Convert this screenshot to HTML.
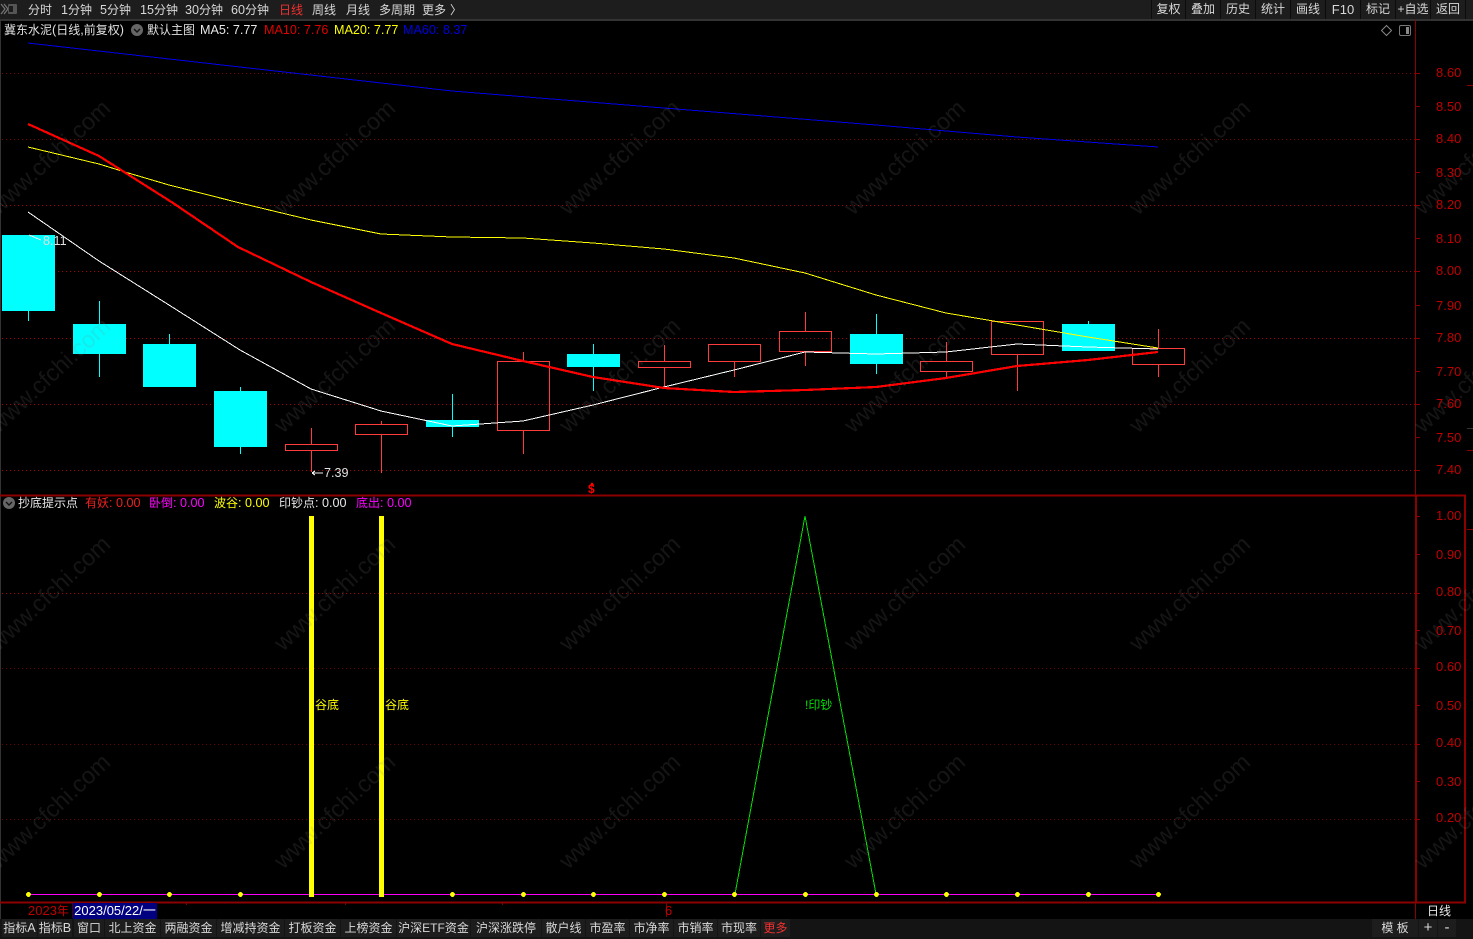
<!DOCTYPE html>
<html lang="zh"><head><meta charset="utf-8"><title>冀东水泥</title>
<style>
html,body{margin:0;padding:0;background:#000;width:1473px;height:939px;overflow:hidden}
body{position:relative;font-family:"Liberation Sans","Noto Sans CJK SC",sans-serif;font-size:12px;color:#d8d8d8}
svg{position:absolute;left:0;top:0}
.t{position:absolute;white-space:nowrap;line-height:16px;height:16px}
.n{font-size:12.6px}
.b{position:absolute;background:#1d1d1d;text-align:center;white-space:nowrap;line-height:18px;height:18px;top:919px;color:#d8d8d8}
.u{position:absolute;background:#1d1d1d;text-align:center;white-space:nowrap;line-height:19px;height:19px;top:0;color:#d8d8d8}
.a{position:absolute;left:1436px;color:#c00000;font-size:13px;line-height:16px;height:16px}
.r{color:#e00000}.m{color:#f0f}.y{color:#ff0}.bl{color:#0000e0}.w{color:#e8e8e8}
</style></head><body>
<div style="position:absolute;left:0;top:0;width:1473px;height:19px;background:#1d1d1d"></div>
<div style="position:absolute;left:0;top:19px;width:1473px;height:2px;background:#333"></div>
<div style="position:absolute;left:0;top:919px;width:1473px;height:20px;background:#141414"></div>

<svg width="1473" height="939" viewBox="0 0 1473 939" shape-rendering="crispEdges" fill="none">
<line x1="0.5" y1="20" x2="0.5" y2="919" stroke="#333"/>
<!-- grid -->
<g stroke="#800000" stroke-dasharray="1 3">
<path d="M2 73.5H1415M2 139.5H1415"/>
</g>
<g stroke="#6a0000" stroke-dasharray="1 3">
<path d="M2 668.5H1415M2 744.5H1415M2 819.5H1415"/>
</g>
<g stroke="#a80000" stroke-dasharray="1 3">
<path d="M2 205.5H1415M2 271.5H1415M2 338.5H1415M2 404.5H1415M2 470.5H1415M2 593.5H1415"/>
</g>
<!-- axes -->
<g stroke="#8c0000">
<path d="M1415.5 20V496M1415.5 902V919"/>
<path d="M0 495.5H1466M0 902.5H1466" stroke-width="2"/>
<path d="M1416 495V903M1465 495V903" stroke-width="2"/>
<path d="M1415 73.5h5M1415 106.5h5M1415 139.5h5M1415 172.5h5M1415 205.5h5M1415 238.5h5M1415 271.5h5M1415 305.5h5M1415 338.5h5M1415 371.5h5M1415 404.5h5M1415 437.5h5M1415 470.5h5M1415 516.5h5M1415 554.5h5M1415 593.5h5M1415 630.5h5M1415 668.5h5M1415 705.5h5M1415 744.5h5M1415 781.5h5M1415 819.5h5"/>
<path d="M1467 85.5h6M1467 450.5h6M1467 529.5h6M186.5 903v2M345.5 903v2M502.5 903v2M666.5 903v14M73 903v15"/>
</g>
<path d="M1467 428.5h6" stroke="#333"/>
<!-- cyan candles -->
<g fill="#0ff" stroke="none">
<rect x="2" y="235" width="53" height="76"/><rect x="28" y="311" width="1" height="10"/>
<rect x="73" y="324" width="53" height="30"/><rect x="99" y="301" width="1" height="76"/>
<rect x="143" y="344" width="53" height="43"/><rect x="169" y="334" width="1" height="10"/>
<rect x="214" y="391" width="53" height="56"/><rect x="240" y="387" width="1" height="67"/>
<rect x="426" y="420" width="53" height="7"/><rect x="452" y="394" width="1" height="43"/>
<rect x="567" y="354" width="53" height="13"/><rect x="593" y="344" width="1" height="47"/>
<rect x="850" y="334" width="53" height="30"/><rect x="876" y="314" width="1" height="60"/>
<rect x="1062" y="324" width="53" height="27"/><rect x="1088" y="321" width="1" height="3"/>
</g>
<!-- red candles -->
<g stroke="#ff3c3c">
<rect x="285.5" y="444.5" width="52" height="6"/><path d="M311.5 428V444M311.5 451V472"/>
<rect x="355.5" y="424.5" width="52" height="10"/><path d="M381.5 421V424M381.5 435V473"/>
<rect x="497.5" y="361.5" width="52" height="69"/><path d="M523.5 352V361M523.5 431V454"/>
<rect x="638.5" y="361.5" width="52" height="6"/><path d="M664.5 345V361M664.5 368V388"/>
<rect x="708.5" y="344.5" width="52" height="17"/><path d="M734.5 362V377"/>
<rect x="779.5" y="331.5" width="52" height="20"/><path d="M805.5 312V331M805.5 352V366"/>
<rect x="920.5" y="361.5" width="52" height="10"/><path d="M946.5 342V361M946.5 372V378"/>
<rect x="991.5" y="321.5" width="52" height="33"/><path d="M1017.5 355V391"/>
<rect x="1132.5" y="348.5" width="52" height="16"/><path d="M1158.5 329V348M1158.5 365V377"/>
</g>
<!-- MA lines -->
<polyline stroke="#0000e6" points="28,43 240,67 452,91 664,108 876,125 1017,137 1158,147"/>
<polyline stroke="#ffff00" stroke-width="1" points="28,147 99,164 125,172 169,185 240,203 311,220 381,234 452,237 523,238 593,243 664,249 734,258 805,273 876,295 946,313 1017,325 1088,337 1158,348"/>
<polyline stroke="#ffffff" stroke-width="1" points="28,212 99,261 169,305 240,350 311,389 381,411 452,426 523,421 593,405 664,387 734,370 805,352 876,354 946,352 1017,344 1088,347 1158,349"/>
<polyline stroke="#ff0000" stroke-width="2.2" points="28,124 99,156 173,203 238,247 311,282 381,313 452,344 523,361 593,377 664,388 734,392 805,390 876,387 946,378 1017,366 1088,360 1158,352"/>
<!-- arrows -->
<path d="M29 235 L41 240" stroke="#eee"/>
<path d="M312 473H323M312 473l3-2M312 473l3 2" stroke="#eee"/>
<!-- lower panel -->
<rect x="309" y="516" width="5" height="378" fill="#ff0" stroke="none"/>
<rect x="379" y="516" width="5" height="378" fill="#ff0" stroke="none"/>
<polyline stroke="#00e000" points="735,894 805,516 876,894"/>
<path d="M28 894.5H1158" stroke="#f0f"/>
<g fill="#ff0" stroke="none">
<circle cx="28.5" cy="894.5" r="2.4"/><circle cx="99.5" cy="894.5" r="2.4"/><circle cx="169.5" cy="894.5" r="2.4"/><circle cx="240.5" cy="894.5" r="2.4"/>
<rect x="309" y="890" width="5" height="7"/><rect x="379" y="890" width="5" height="7"/>
<circle cx="452.5" cy="894.5" r="2.4"/><circle cx="523.5" cy="894.5" r="2.4"/><circle cx="593.5" cy="894.5" r="2.4"/><circle cx="664.5" cy="894.5" r="2.4"/><circle cx="734.5" cy="894.5" r="2.4"/><circle cx="805.5" cy="894.5" r="2.4"/><circle cx="876.5" cy="894.5" r="2.4"/><circle cx="946.5" cy="894.5" r="2.4"/><circle cx="1017.5" cy="894.5" r="2.4"/><circle cx="1088.5" cy="894.5" r="2.4"/><circle cx="1158.5" cy="894.5" r="2.4"/>
</g>
<!-- $ mark -->
<path d="M592 482l-2 3h4z" fill="#f00" stroke="none"/>
</svg>

<!-- watermark -->
<svg width="1473" height="939" viewBox="0 0 1473 939" style="z-index:3" shape-rendering="geometricPrecision">
<g fill="rgba(130,130,130,.16)" font-family="Liberation Sans,sans-serif" font-size="23.5" text-anchor="middle">
<text transform="translate(55,163) rotate(-43)">www.cfchi.com</text>
<text transform="translate(340,163) rotate(-43)">www.cfchi.com</text>
<text transform="translate(625,163) rotate(-43)">www.cfchi.com</text>
<text transform="translate(910,163) rotate(-43)">www.cfchi.com</text>
<text transform="translate(1195,163) rotate(-43)">www.cfchi.com</text>
<text transform="translate(1480,163) rotate(-43)">www.cfchi.com</text>
<text transform="translate(55,381) rotate(-43)">www.cfchi.com</text>
<text transform="translate(340,381) rotate(-43)">www.cfchi.com</text>
<text transform="translate(625,381) rotate(-43)">www.cfchi.com</text>
<text transform="translate(910,381) rotate(-43)">www.cfchi.com</text>
<text transform="translate(1195,381) rotate(-43)">www.cfchi.com</text>
<text transform="translate(1480,381) rotate(-43)">www.cfchi.com</text>
<text transform="translate(55,599) rotate(-43)">www.cfchi.com</text>
<text transform="translate(340,599) rotate(-43)">www.cfchi.com</text>
<text transform="translate(625,599) rotate(-43)">www.cfchi.com</text>
<text transform="translate(910,599) rotate(-43)">www.cfchi.com</text>
<text transform="translate(1195,599) rotate(-43)">www.cfchi.com</text>
<text transform="translate(1480,599) rotate(-43)">www.cfchi.com</text>
<text transform="translate(55,817) rotate(-43)">www.cfchi.com</text>
<text transform="translate(340,817) rotate(-43)">www.cfchi.com</text>
<text transform="translate(625,817) rotate(-43)">www.cfchi.com</text>
<text transform="translate(910,817) rotate(-43)">www.cfchi.com</text>
<text transform="translate(1195,817) rotate(-43)">www.cfchi.com</text>
<text transform="translate(1480,817) rotate(-43)">www.cfchi.com</text>
</g>
</svg>

<!-- top bar -->
<svg width="20" height="19" style="z-index:4" viewBox="0 0 20 19" fill="none">
<path d="M1 4l4 5-4 5" stroke="#777" stroke-width="1.2"/><path d="M4 4l4 5-4 5" stroke="#777" stroke-width="1.2"/>
<rect x="8" y="4" width="9" height="10" rx="1" fill="#555"/><rect x="9" y="6" width="4" height="6" fill="#1d1d1d"/>
</svg>
<div style="z-index:4;position:absolute;left:0;top:0">
<span class="t" style="left:28px;top:2px">分时</span>
<span class="t" style="left:61px;top:2px"><span class="n">1</span>分钟</span>
<span class="t" style="left:100px;top:2px"><span class="n">5</span>分钟</span>
<span class="t" style="left:140px;top:2px"><span class="n">15</span>分钟</span>
<span class="t" style="left:185px;top:2px"><span class="n">30</span>分钟</span>
<span class="t" style="left:231px;top:2px"><span class="n">60</span>分钟</span>
<span class="t" style="left:279px;top:2px;color:#f03030">日线</span>
<span class="t" style="left:312px;top:2px">周线</span>
<span class="t" style="left:346px;top:2px">月线</span>
<span class="t" style="left:379px;top:2px">多周期</span>
<span class="t" style="left:422px;top:2px">更多</span>
<span class="t" style="left:450px;top:2px">〉</span>
</div>
<div class="u" style="left:1152px;width:33px">复权</div>
<div class="u" style="left:1186px;width:34px">叠加</div>
<div class="u" style="left:1221px;width:34px">历史</div>
<div class="u" style="left:1256px;width:34px">统计</div>
<div class="u" style="left:1291px;width:34px">画线</div>
<div class="u" style="left:1326px;width:34px;font-size:13px">F10</div>
<div class="u" style="left:1361px;width:34px">标记</div>
<div class="u" style="left:1396px;width:34px">+自选</div>
<div class="u" style="left:1431px;width:34px">返回</div>
<svg width="1473" height="40" style="z-index:4" viewBox="0 0 1473 40" fill="none">
<path d="M1151.5 0V19M1185.5 0V19M1220.5 0V19M1255.5 0V19M1290.5 0V19M1325.5 0V19M1360.5 0V19M1395.5 0V19M1430.5 0V19M1465.5 0V19" stroke="#0c0c0c"/>
<path d="M1386.5 25.5l5 5-5 5-5-5z" stroke="#888"/>
<rect x="1399.5" y="25.5" width="11" height="10" rx="1.5" stroke="#777"/><rect x="1406" y="27" width="3" height="7" fill="#888"/>
<circle cx="137" cy="30" r="6" fill="#666"/><path d="M134 29l3 3 3-3" stroke="#111" stroke-width="1.4"/>
</svg>

<!-- header row -->
<div style="z-index:4;position:absolute;left:0;top:0">
<span class="t" style="left:4px;top:22px;color:#e0e0e0">冀东水泥<span class="n">(</span>日线<span class="n">,</span>前复权<span class="n">)</span></span>
<span class="t" style="left:147px;top:22px;color:#e0e0e0">默认主图</span>
<span class="t n" style="left:200px;top:22px;color:#e8e8e8">MA5: 7.77</span>
<span class="t n r" style="left:264px;top:22px">MA10: 7.76</span>
<span class="t n y" style="left:334px;top:22px">MA20: 7.77</span>
<span class="t n bl" style="left:403px;top:22px">MA60: 8.37</span>
<span class="t n" style="left:43px;top:233px;color:#e0e0e0">8.11</span>
<span class="t n" style="left:324px;top:465px;color:#e0e0e0">7.39</span>
<span class="t" style="left:588px;top:481px;color:#f00;font-weight:bold">$</span>
<span class="t" style="left:18px;top:495px;color:#e8e8e8">抄底提示点</span>
<span class="t" style="left:85px;top:495px;color:#f02020">有妖<span class="n">: 0.00</span></span>
<span class="t m" style="left:149px;top:495px">卧倒<span class="n">: 0.00</span></span>
<span class="t y" style="left:214px;top:495px">波谷<span class="n">: 0.00</span></span>
<span class="t w" style="left:279px;top:495px">印钞点<span class="n">: 0.00</span></span>
<span class="t m" style="left:356px;top:495px">底出<span class="n">: 0.00</span></span>
<span class="t y" style="left:315px;top:697px">谷底</span>
<span class="t y" style="left:385px;top:697px">谷底</span>
<span class="t" style="left:805px;top:697px;color:#00e000">!印钞</span>
<span class="t" style="left:28px;top:903px;color:#c00000"><span style="font-size:13px">2023</span>年</span>
<span class="t" style="left:73px;top:903px;width:84px;background:#000080;color:#fff;text-align:center;font-size:13px">2023/05/22/一</span>
<span class="t" style="left:665px;top:903px;color:#c00000;font-size:13px">6</span>
<span class="t w" style="left:1427px;top:903px">日线</span>
</div>
<svg width="20" height="510" style="z-index:4" viewBox="0 0 20 510" fill="none"><circle cx="9" cy="503" r="6" fill="#666"/><path d="M6 502l3 3 3-3" stroke="#111" stroke-width="1.4"/></svg>

<!-- axis labels -->
<div style="z-index:4;position:absolute;left:0;top:0">
<span class="a" style="top:65px">8.60</span><span class="a" style="top:99px">8.50</span><span class="a" style="top:131px">8.40</span><span class="a" style="top:165px">8.30</span><span class="a" style="top:197px">8.20</span><span class="a" style="top:231px">8.10</span><span class="a" style="top:263px">8.00</span><span class="a" style="top:298px">7.90</span><span class="a" style="top:330px">7.80</span><span class="a" style="top:364px">7.70</span><span class="a" style="top:396px">7.60</span><span class="a" style="top:430px">7.50</span><span class="a" style="top:462px">7.40</span>
<span class="a" style="top:508px">1.00</span><span class="a" style="top:547px">0.90</span><span class="a" style="top:584px">0.80</span><span class="a" style="top:623px">0.70</span><span class="a" style="top:659px">0.60</span><span class="a" style="top:698px">0.50</span><span class="a" style="top:735px">0.40</span><span class="a" style="top:774px">0.30</span><span class="a" style="top:810px">0.20</span>
</div>

<!-- bottom tabs -->
<div class="b" style="left:2px;width:35px">指标<span class="n">A</span></div>
<div class="b" style="left:38px;width:34px">指标<span class="n">B</span></div>
<div class="b" style="left:74px;width:30px">窗口</div>
<div class="b" style="left:105px;width:55px">北上资金</div>
<div class="b" style="left:161px;width:55px">两融资金</div>
<div class="b" style="left:217px;width:67px">增减持资金</div>
<div class="b" style="left:285px;width:55px">打板资金</div>
<div class="b" style="left:341px;width:55px">上榜资金</div>
<div class="b" style="left:397px;width:73px">沪深<span style="font-size:12px">ETF</span>资金</div>
<div class="b" style="left:471px;width:70px">沪深涨跌停</div>
<div class="b" style="left:542px;width:43px">散户线</div>
<div class="b" style="left:586px;width:43px">市盈率</div>
<div class="b" style="left:630px;width:43px">市净率</div>
<div class="b" style="left:674px;width:43px">市销率</div>
<div class="b" style="left:718px;width:42px">市现率</div>
<div class="b" style="left:761px;width:29px;color:#f03030">更多</div>
<div class="b" style="left:1372px;width:46px">模&nbsp;板</div>
<div class="b" style="left:1419px;width:18px;font-size:15px">+</div>
<div class="b" style="left:1438px;width:18px;font-size:15px">-</div>
</body></html>
